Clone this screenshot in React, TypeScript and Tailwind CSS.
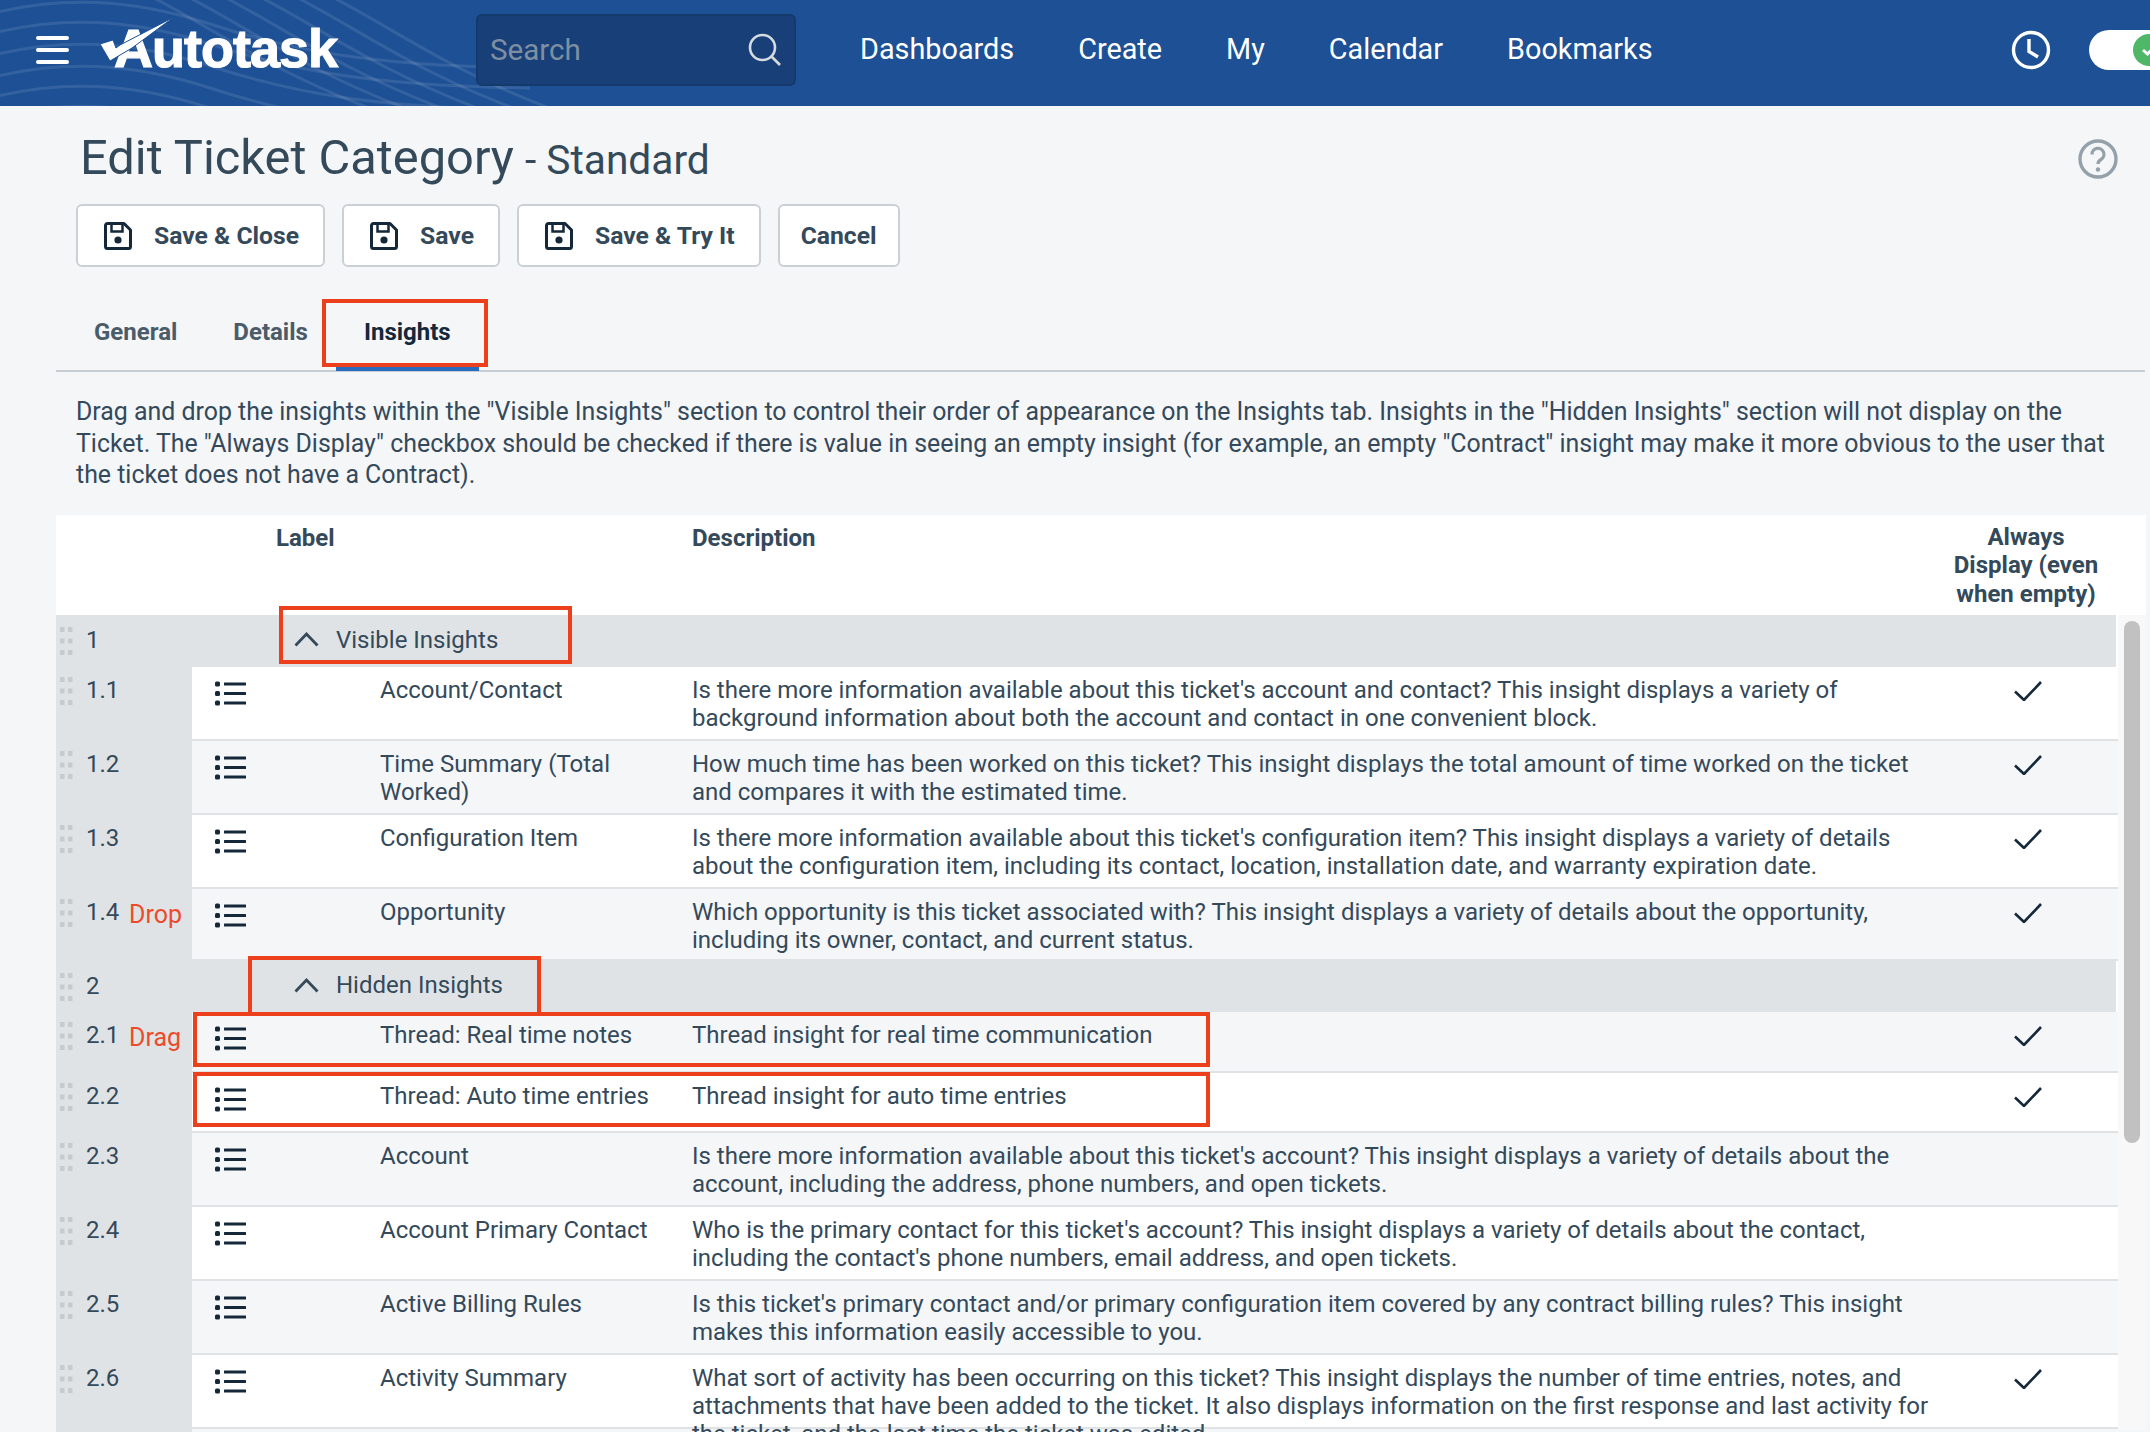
const rows = [
  { n: '1.1', label: 'Account/Contact', desc: "Is there more information available about this ticket's account and contact? This insight displays a variety of background information about both the account and contact in one convenient block.", check: true },
  { n: '1.2', label: 'Time Summary (Total Worked)', desc: 'How much time has been worked on this ticket? This insight displays the total amount of time worked on the ticket and compares it with the estimated time.', check: true },
  { n: '1.3', label: 'Configuration Item', desc: "Is there more information available about this ticket's configuration item? This insight displays a variety of details about the configuration item, including its contact, location, installation date, and warranty expiration date.", check: true },
  { n: '1.4', label: 'Opportunity', desc: 'Which opportunity is this ticket associated with? This insight displays a variety of details about the opportunity, including its owner, contact, and current status.', check: true, note: 'Drop', last: true },
];

const hidden = [
  { n: '2.1', label: 'Thread: Real time notes', desc: 'Thread insight for real time communication', check: true, note: 'Drag', short: true },
  { n: '2.2', label: 'Thread: Auto time entries', desc: 'Thread insight for auto time entries', check: true, short: true },
  { n: '2.3', label: 'Account', desc: "Is there more information available about this ticket's account? This insight displays a variety of details about the account, including the address, phone numbers, and open tickets." },
  { n: '2.4', label: 'Account Primary Contact', desc: "Who is the primary contact for this ticket's account? This insight displays a variety of details about the contact, including the contact's phone numbers, email address, and open tickets." },
  { n: '2.5', label: 'Active Billing Rules', desc: "Is this ticket's primary contact and/or primary configuration item covered by any contract billing rules? This insight makes this information easily accessible to you." },
  { n: '2.6', label: 'Activity Summary', desc: 'What sort of activity has been occurring on this ticket? This insight displays the number of time entries, notes, and attachments that have been added to the ticket. It also displays information on the first response and last activity for the ticket, and the last time the ticket was edited.', check: true },
];

type Row = { n: string; label: string; desc: string; check?: boolean; note?: string; last?: boolean; short?: boolean };

function Waves() {
  const arcs = [14, 34, 56, 78, 98, 118];
  const diags = [150, 186, 222, 258, 294, 330];
  return (
    <svg className="absolute left-0 top-0" width="640" height="106" viewBox="0 0 640 106" fill="none">
      {arcs.map(y => (
        <path key={y} d={`M-10 ${y} C 60 ${y - 18}, 130 ${y - 16}, 210 ${y + 10} S 370 ${y + 52}, 530 ${y + 54}`} stroke="#ffffff" strokeOpacity="0.1" strokeWidth="3" />
      ))}
      {diags.map(x => (
        <path key={x} d={`M${x} -4 C ${x + 60} 26, ${x + 120} 72, ${x + 230} 112`} stroke="#ffffff" strokeOpacity="0.1" strokeWidth="3" />
      ))}
    </svg>
  );
}

function Logo() {
  return (
    <div className="relative ml-[31px] h-[50px] w-[240px]">
      <span className="absolute left-[14px] top-[-2px] font-['Liberation_Sans',sans-serif] text-[54px] leading-[50px] font-bold tracking-[-1px] text-white [-webkit-text-stroke:1.2px_white]">Autotask</span>
      <svg className="absolute left-0 top-[-8px]" width="80" height="50" viewBox="0 0 80 50">
        <path d="M0 27 L13 23 L16 31 L20 28 L74 0 L32 31 L10 44 Z" fill="#ffffff" stroke="#1d5095" strokeWidth="1" />
      </svg>
    </div>
  );
}

function SaveIcon() {
  return (
    <svg width="28" height="28" viewBox="0 0 28 28" fill="none" className="shrink-0">
      <path d="M3.5 1.5 H20 L26.5 8 V24.5 a2 2 0 0 1 -2 2 H3.5 a2 2 0 0 1 -2 -2 V3.5 a2 2 0 0 1 2 -2 Z" stroke="#14283a" strokeWidth="3" strokeLinejoin="round" />
      <path d="M7.5 2 V9.5 H18.5 V2" stroke="#14283a" strokeWidth="2.5" />
      <circle cx="14" cy="18" r="3.6" fill="#14283a" />
    </svg>
  );
}

function ActionButton({ label, icon = true }: { label: string; icon?: boolean }) {
  return (
    <button className={`flex h-[63px] items-center rounded-[6px] border-2 border-[#c9d1d5] bg-white text-[24.7px] font-bold text-[#34495a] ${icon ? 'gap-[22px] pl-[26px] pr-[24px]' : 'px-[21px]'}`}>
      {icon && <SaveIcon />}
      {label}
    </button>
  );
}

function ListIcon() {
  return (
    <svg width="31" height="25" viewBox="0 0 31 25" fill="#14283a">
      <rect x="0" y="0.5" width="5" height="5" rx="1.5" />
      <rect x="0" y="10" width="5" height="5" rx="1.5" />
      <rect x="0" y="19.5" width="5" height="5" rx="1.5" />
      <rect x="9" y="1.5" width="22" height="3" rx="0.5" />
      <rect x="9" y="11" width="22" height="3" rx="0.5" />
      <rect x="9" y="20.5" width="22" height="3" rx="0.5" />
    </svg>
  );
}

function DragDots() {
  return (
    <svg width="13" height="28" viewBox="0 0 13 28" fill="#c6cbce" className="shrink-0">
      {[0, 11.5, 23].map(y => (
        <g key={y}>
          <rect x="0" y={y} width="4.5" height="5" />
          <rect x="8" y={y} width="4.5" height="5" />
        </g>
      ))}
    </svg>
  );
}

function CheckMark() {
  return (
    <svg width="28" height="20" viewBox="0 0 28 20" fill="none">
      <path d="M1 10.5 L10 19 L27 1" stroke="#14283a" strokeWidth="2.6" />
    </svg>
  );
}

function GroupRow({ n, label, className }: { n: string; label: string; className: string }) {
  return (
    <div className={`grid grid-cols-[136px_101px_1fr] border-r-2 border-r-white bg-[#e0e3e5] ${className}`}>
      <div className="flex items-start gap-[13px] pl-1 pt-[12px]">
        <DragDots />
        <span className="mt-[-1px]">{n}</span>
      </div>
      <div />
      <div className="flex items-center gap-[17px] pb-[2px] pl-[1px]">
        <svg width="25" height="15" viewBox="0 0 25 15" fill="none">
          <path d="M1.5 13.5 L12.5 2 L23.5 13.5" stroke="#34495a" strokeWidth="2.8" />
        </svg>
        <span>{label}</span>
      </div>
    </div>
  );
}

function TableRow({ row, odd }: { row: Row; odd: boolean }) {
  const height = row.n === '2.1' ? 'h-[61px]' : row.short ? 'h-[60px]' : row.last ? 'h-[72px] border-b-0' : 'h-[74px]';
  return (
    <div className={`grid grid-cols-[136px_188px_312px_1fr_180px] border-b-2 border-[#e0e3e5] ${height} ${odd ? 'bg-white' : 'bg-[#f4f6f8]'}`}>
      <div className="flex items-start bg-[#e0e3e5] pl-1 pt-[10px]">
        <DragDots />
        <span className="ml-[13px] mt-[-1px] w-[43px]">{row.n}</span>
        {row.note && <span className="mt-[2px] text-[25px] text-[#ec4a2c]">{row.note}</span>}
      </div>
      <div className="pl-[23px] pt-[14px]"><ListIcon /></div>
      <div className="pr-3 pt-[9px]">{row.label}</div>
      <div className="pt-[9px]">{row.desc}</div>
      <div className="flex justify-center pt-[14px]">{row.check && <CheckMark />}</div>
    </div>
  );
}

export default function App() {
  return (
    <div className="h-screen overflow-hidden bg-[#f4f6f8] font-['Roboto',sans-serif] text-[#34495a]">
      <header className="relative flex h-[106px] items-center overflow-hidden bg-[#1d5095] pb-[6px] pl-[36px] text-white">
        <Waves />
        <div className="relative flex flex-col gap-[8px]">
          <span className="block h-[4px] w-[33px] rounded-full bg-white" />
          <span className="block h-[4px] w-[33px] rounded-full bg-white" />
          <span className="block h-[4px] w-[33px] rounded-full bg-white" />
        </div>
        <Logo />
        <div className="relative ml-[136px] flex h-[72px] w-[320px] items-center justify-between rounded-[6px] border-2 border-[#143a6c] bg-[#183f78] pl-[12px] pr-[12px]">
          <span className="text-[29.6px] text-[#7e8fa2]">Search</span>
          <svg width="34" height="34" viewBox="0 0 34 34" fill="none">
            <circle cx="14.5" cy="14.5" r="12.5" stroke="#d6dbe0" strokeWidth="2.6" />
            <path d="M23.5 23.5 L32 32" stroke="#d6dbe0" strokeWidth="2.6" />
          </svg>
        </div>
        <nav className="relative ml-[64px] flex gap-[64px] text-[28.8px]">
          <span>Dashboards</span>
          <span>Create</span>
          <span>My</span>
          <span>Calendar</span>
          <span>Bookmarks</span>
        </nav>
        <div className="relative ml-auto flex items-center gap-[38px]">
          <svg width="40" height="40" viewBox="0 0 40 40" fill="none">
            <circle cx="20" cy="20" r="17.5" stroke="#ffffff" strokeWidth="3.4" />
            <path d="M18 9 V21.5 L27 27" stroke="#ffffff" strokeWidth="3.4" />
          </svg>
          <div className="flex h-[40px] w-[61px] items-center rounded-l-full bg-white pl-[44px]">
            <div className="flex h-[32px] w-[32px] shrink-0 items-center justify-center rounded-full bg-[#4fb868]">
              <svg width="16" height="12" viewBox="0 0 16 12" fill="none">
                <path d="M2 6 L6.5 10 L14 2" stroke="#ffffff" strokeWidth="3" />
              </svg>
            </div>
          </div>
        </div>
      </header>

      <div className="flex items-center justify-between pl-[80px] pr-[32px] pt-[18px]">
        <h1 className="text-[48.8px] leading-[68px] font-normal">
          Edit Ticket Category
          <span className="ml-[11px] text-[40.7px]">- Standard</span>
        </h1>
        <svg width="40" height="40" viewBox="0 0 40 40" fill="none">
          <circle cx="20" cy="20" r="18" stroke="#94a1aa" strokeWidth="3.4" />
          <path d="M14 15.5 a6 6 0 1 1 9 5 c-2 1.2 -3 2.4 -3 4.5" stroke="#94a1aa" strokeWidth="3.2" />
          <circle cx="20" cy="30.5" r="2.2" fill="#94a1aa" />
        </svg>
      </div>

      <div className="ml-[76px] mt-[10px] flex gap-[17px]">
        <ActionButton label="Save & Close" />
        <ActionButton label="Save" />
        <ActionButton label="Save & Try It" />
        <ActionButton label="Cancel" icon={false} />
      </div>

      <div className="ml-[56px] mr-[5px] mt-[33px] flex h-[72px] items-center border-b-2 border-[#c6ced3] pb-[6px] pl-[38px] text-[24px] font-bold text-[#4a5c69]">
        <span>General</span>
        <span className="ml-[56px]">Details</span>
        <span className="relative ml-[56px] text-[#14283a]">
          Insights
          <span className="absolute left-[-42px] top-[-15px] h-[68px] w-[166px] border-[4px] border-[#ec3f1c]" />
          <span className="absolute left-[-28px] top-[53px] h-[4px] w-[143px] bg-[#2a6bbf]" />
        </span>
      </div>

      <p className="ml-[76px] mr-[40px] mt-[24px] text-[24.9px] leading-[31.6px]">
        Drag and drop the insights within the "Visible Insights" section to control their order of appearance on the Insights tab. Insights in the "Hidden Insights" section will not display on the Ticket. The "Always Display" checkbox should be checked if there is value in seeing an empty insight (for example, an empty "Contract" insight may make it more obvious to the user that the ticket does not have a Contract).
      </p>

      <div className="relative ml-[56px] mr-[4px] mt-[24px] text-[24px] leading-[28px]">
        <div className="grid h-[100px] grid-cols-[220px_416px_1fr_240px] bg-white pt-[9px] font-bold">
          <div />
          <div>Label</div>
          <div>Description</div>
          <div className="mt-[-1px] text-center leading-[28.5px]">Always<br />Display (even<br />when empty)</div>
        </div>
        <div className="grid grid-cols-[1fr_28px]">
          <div>
            <GroupRow n="1" label="Visible Insights" className="h-[52px]" />
            {rows.map((row, i) => <TableRow key={row.n} row={row} odd={i % 2 === 0} />)}
            <GroupRow n="2" label="Hidden Insights" className="h-[51px]" />
            {hidden.map((row, i) => <TableRow key={row.n} row={row} odd={i % 2 === 1} />)}
          </div>
          <div className="bg-[#f8f8f8] pl-[6px] pr-[6px] pt-[6px]">
            <div className="h-[522px] rounded-[8px] bg-[#c1c1c1]" />
          </div>
        </div>

        {/* annotation boxes on top of the table */}
        <div className="absolute left-[223px] top-[91px] h-[58px] w-[293px] border-[4px] border-[#ec3f1c]" />
        <div className="absolute left-[192px] top-[441px] h-[56px] w-[293px] border-[4px] border-b-0 border-[#ec3f1c]" />
        <div className="absolute left-[137px] top-[497px] h-[55px] w-[1017px] border-[4px] border-[#ec3f1c]" />
        <div className="absolute left-[137px] top-[557px] h-[55px] w-[1017px] border-[4px] border-[#ec3f1c]" />
      </div>
    </div>
  );
}
